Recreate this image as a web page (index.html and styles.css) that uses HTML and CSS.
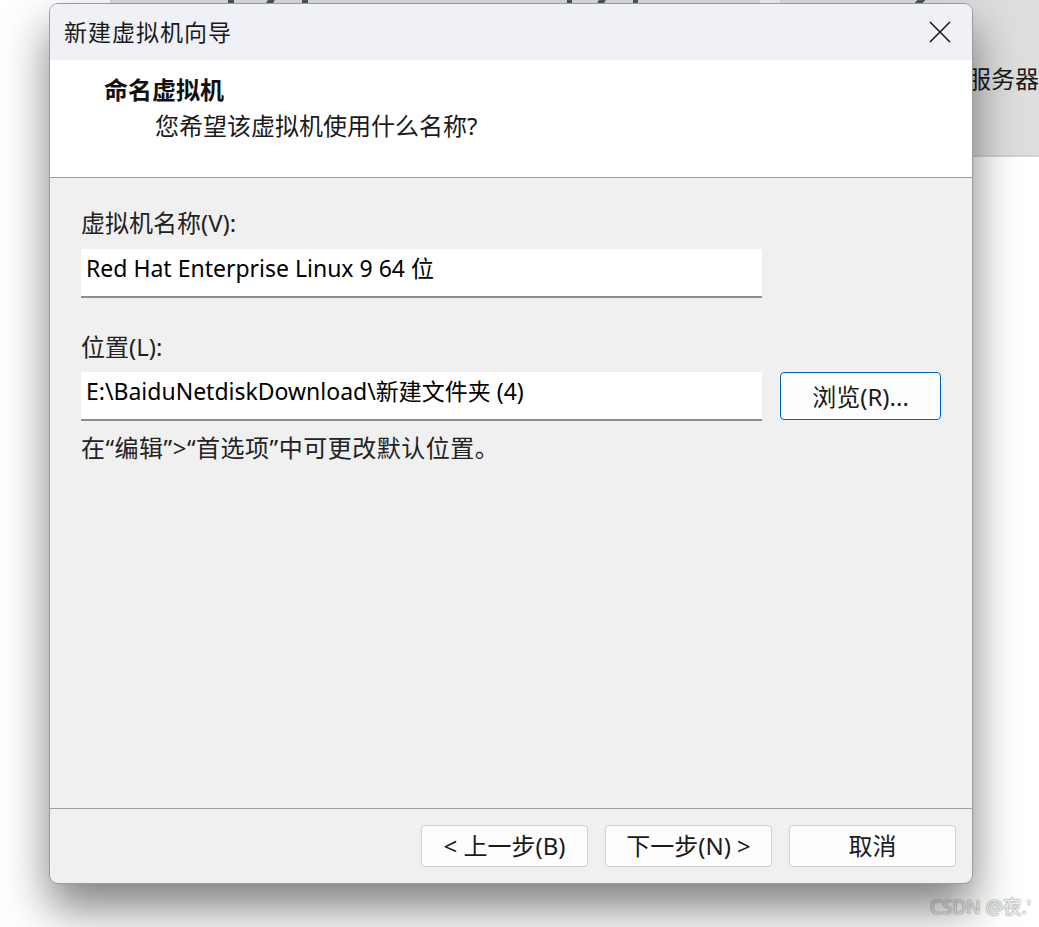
FILE: index.html
```html
<!DOCTYPE html>
<html lang="zh-CN">
<head>
  <meta charset="UTF-8" />
  <title>新建虚拟机向导</title>
  <link rel="stylesheet" href="styles.css">
</head>
<body>
  <div class="backdrop">
    <span class="mark m1"></span>
    <span class="mark m2"></span>
    <span class="mark m3"></span>
    <span class="mark m4"></span>
    <span class="mark m5"></span>
    <span class="mark m6"></span>
    <span class="mark m7"></span>
    <span class="mark m8"></span>
    <span class="gap-light"></span>
    <span class="backdrop-text">服务器</span>
  </div>

  <div class="dialog">
    <div class="titlebar">
      <span class="title">新建虚拟机向导</span>
      <button class="close" aria-label="关闭">
        <svg width="22" height="22" viewBox="0 0 22 22">
          <path d="M1 1 L21 21 M21 1 L1 21" stroke="#1b1b1b" stroke-width="1.6" fill="none"/>
        </svg>
      </button>
    </div>

    <div class="header">
      <div class="header-title">命名虚拟机</div>
      <div class="header-sub">您希望该虚拟机使用什么名称?</div>
    </div>

    <div class="content">
      <div class="label first">虚拟机名称(V):</div>
      <div class="field">Red Hat Enterprise Linux 9 64 位</div>

      <div class="label second">位置(L):</div>
      <div class="field-row">
        <div class="field">E:\BaiduNetdiskDownload\新建文件夹 (4)</div>
        <button class="btn browse">浏览(R)...</button>
      </div>

      <div class="hint">在“编辑”&gt;“首选项”中可更改默认位置。</div>
    </div>

    <div class="footer">
      <button class="btn">&lt; 上一步(B)</button>
      <button class="btn">下一步(N) &gt;</button>
      <button class="btn">取消</button>
    </div>
  </div>

  <div class="watermark">CSDN @夜.'</div>
</body>
</html>
```

FILE: styles.css
```css
html, body {
  margin: 0;
  padding: 0;
}

body {
  width: 1039px;
  height: 927px;
  overflow: hidden;
  position: relative;
  background-color: #ffffff;
  font-family: "Noto Sans", "Noto Sans CJK SC", sans-serif;
  color: #1a1a1a;
  padding-top: 3px;
  padding-left: 49px;
  box-sizing: border-box;
}

/* window behind the dialog */
.backdrop {
  position: absolute;
  left: 110px;
  top: 0;
  width: 929px;
  height: 155px;
  background-color: #dedede;
  border-bottom: 2px solid #d2d2d2;
}

.mark {
  position: absolute;
  background-color: #4b5661;
}

.m1 { left: 118px; top: 0; width: 6px; height: 4px; }
.m2 { left: 157px; top: 0; width: 7px; height: 3px; transform: skewX(-30deg); }
.m3 { left: 192px; top: 0; width: 6px; height: 4px; }
.m4 { left: 457px; top: 0; width: 5px; height: 3px; }
.m5 { left: 488px; top: 0; width: 7px; height: 3px; transform: skewX(-30deg); }
.m6 { left: 523px; top: 0; width: 5px; height: 3px; }
.m7 { left: 806px; top: 0; width: 8px; height: 3px; transform: skewX(-40deg); }
.m8 { left: 848px; top: 11px; width: 14px; height: 6px; }

.gap-light {
  position: absolute;
  left: 650px;
  top: 0;
  width: 20px;
  height: 3px;
  background-color: #f4f4f4;
}

.backdrop-text {
  position: absolute;
  left: 857px;
  top: 62px;
  font-size: 24px;
  line-height: 32px;
  color: #1a1a1a;
  font-family: "Noto Sans CJK SC", sans-serif;
}

.dialog {
  position: relative;
  z-index: 1;
  width: 924px;
  height: 881px;
  box-sizing: border-box;
  border: 1px solid #9c9c9c;
  border-radius: 9px;
  overflow: hidden;
  display: flex;
  flex-direction: column;
  background-color: #f0f0f0;
  box-shadow: 0 24px 46px rgba(0, 0, 0, 0.5);
}

.titlebar {
  height: 56px;
  flex-shrink: 0;
  background-color: #f0f1f6;
  display: flex;
  align-items: center;
  justify-content: space-between;
  padding: 0 21px 0 14px;
}

.title {
  font-size: 23px;
  letter-spacing: 1px;
  line-height: 30px;
  margin-top: -3px;
  font-family: "Noto Sans CJK SC", sans-serif;
  color: #1a1a1a;
}

.close {
  background: none;
  border: none;
  padding: 0;
  width: 22px;
  height: 22px;
  display: flex;
  margin-top: 0;
}

.header {
  height: 118px;
  flex-shrink: 0;
  box-sizing: border-box;
  background-color: #ffffff;
  border-bottom: 1px solid #a0a0a0;
  padding: 15px 0 0 54px;
}

.header-title {
  font-size: 24px;
  line-height: 28px;
  font-weight: bold;
  font-family: "Noto Sans CJK SC", sans-serif;
  color: #111;
}

.header-sub {
  font-size: 24px;
  line-height: 28px;
  margin-top: 9px;
  padding-left: 51px;
  font-family: "Noto Sans", "Noto Sans CJK SC", sans-serif;
  color: #1a1a1a;
}

.content {
  flex: 1;
  padding: 0 31px;
  border-bottom: 1px solid #a0a0a0;
}

.label {
  font-size: 24px;
  line-height: 28px;
  color: #222;
}

.label.first {
  margin-top: 31px;
  margin-bottom: 12px;
}

.label.second {
  margin-top: 35px;
  margin-bottom: 11px;
}

.field {
  width: 681px;
  height: 49px;
  box-sizing: border-box;
  background-color: #ffffff;
  border-bottom: 2px solid #8d8d8d;
  padding: 5px 0 0 5px;
  font-size: 23px;
  line-height: 28px;
  color: #000;
  white-space: nowrap;
}

.field-row {
  display: flex;
  gap: 18px;
  align-items: flex-start;
}

.btn {
  font-family: "Noto Sans", "Noto Sans CJK SC", sans-serif;
  font-size: 24px;
  line-height: 28px;
  color: #1a1a1a;
  background-color: #fdfdfd;
  border: 1px solid #d0d0d0;
  border-radius: 4px;
  padding: 0;
  cursor: pointer;
}

.btn.browse {
  width: 161px;
  height: 48px;
  border-color: #0067c0;
  padding-top: 2px;
}

.hint {
  margin-top: 13px;
  font-size: 24px;
  letter-spacing: 0.5px;
  line-height: 28px;
  color: #222;
}

.footer {
  height: 74px;
  flex-shrink: 0;
  box-sizing: border-box;
  display: flex;
  justify-content: flex-end;
  align-items: flex-start;
  gap: 17px;
  padding: 16px 16px 0 0;
}

.footer .btn {
  width: 167px;
  height: 42px;
}

.watermark {
  position: absolute;
  left: 930px;
  top: 895px;
  font-size: 19px;
  line-height: 24px;
  color: #f2f2f2;
  text-shadow: 0 0 1px #8a8a8a, 0 0 2px #a0a0a0;
  white-space: nowrap;
}
```
